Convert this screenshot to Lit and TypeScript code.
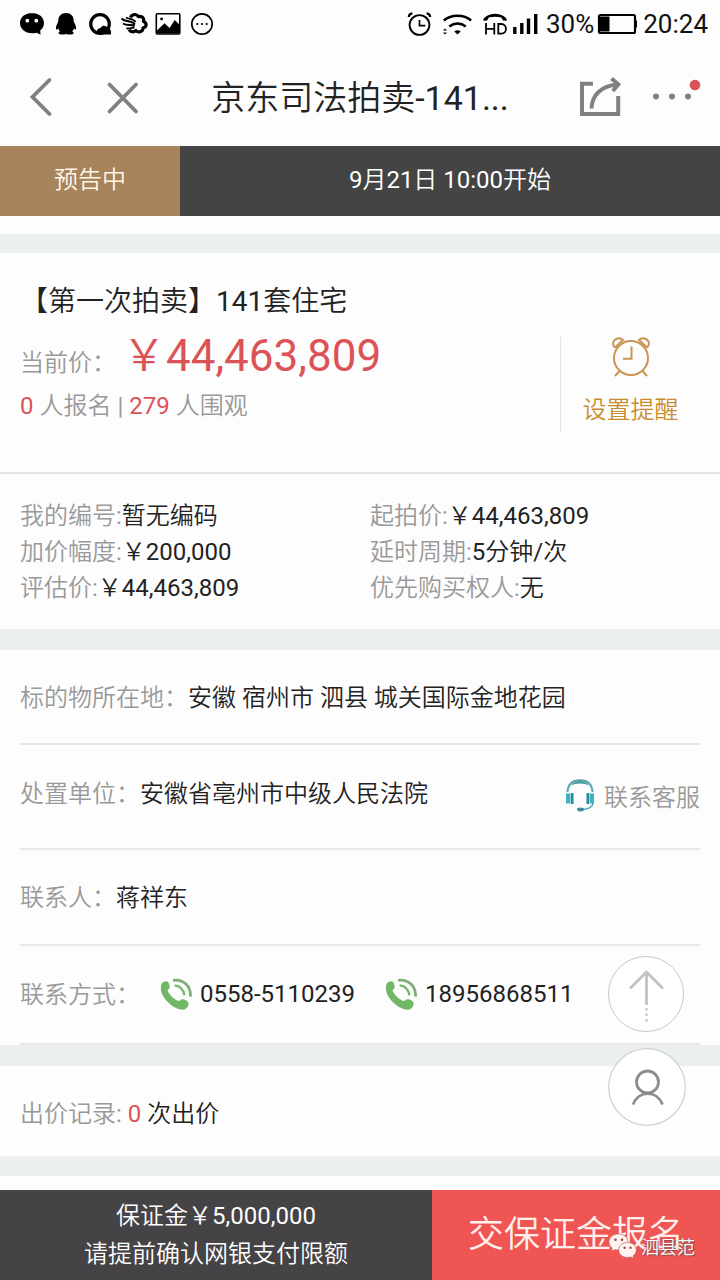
import { LitElement, html, css } from "lit";
import { customElement, property } from "lit/decorators.js";

const fullYen = "\uFFE5";

@customElement("status-bar")
class StatusBar extends LitElement {
  static styles = css`
    :host { display: block; height: 48px; }
    .bar { display: flex; height: 48px; align-items: stretch; justify-content: space-between; padding-right: 12px; font-size: 26px; line-height: 48px; color: #111; }
    .right { display: flex; white-space: nowrap; }
    svg { display: block; flex: none; }
    .level { margin-right: 3px; }
    .time { margin-left: 6px; }
  `;
  render() {
    return html`<div class="bar">
      <svg width="230" height="48" viewBox="0 0 230 48">
        <path d="M32 13c-6.900 0-12 4.300-12 10s5.100 10.300 12 10.300c1.700 0 3.200-.2 4.600-.6l4 2.100-.4-4.400c2.400-1.900 3.800-4.300 3.800-7.400 0-5.700-5.200-10-12-10z" fill="#000"/>
        <circle cx="27.300" cy="20.700" r="1.900" fill="#fff"/><circle cx="36.300" cy="20.700" r="1.900" fill="#fff"/>
        <path d="M66 13c-4.800 0-7.700 3.200-7.700 7.600 0 1.500-.6 2.200-1.300 3.600-1 2-1.400 4.300-.8 5.200.5.500 1.400-.4 2.100-1.200.2 1.400.8 2.400 1.600 3.200-1.400.6-1.600 1.400-1.200 2.100.7 1.300 5.200 1.500 7.300.2 2.200 1.300 6.800 1.100 7.500-.2.400-.8.200-1.500-1.300-2.100.8-.8 1.500-1.800 1.800-3.200.6.800 1.400 1.700 1.900 1.200.5-.8.200-3.200-.8-5.200-.8-1.400-1.400-2.100-1.400-3.600 0-4.400-2.900-7.600-7.700-7.600z" fill="#000"/>
        <circle cx="100" cy="24" r="9.300" fill="none" stroke="#000" stroke-width="3.200"/>
        <path d="M97 30c1.200-2 3-1.500 4-2.500 1.500-2.500 5-2.200 6.500.5 2 .2 3.500 1.800 3.500 3.800v2.800h-11c-2-.5-3.500-2-3-4.600z" fill="#000"/>
        <path d="M130.500 17.500c1.500-3.600 6-4 7.800-.9 4.200-.8 6.200 2 5.200 4.900 3.600 1.300 3.400 5.700-.4 6.300-.4 4.300-4.800 5.300-7.200 2.700-2.300 2.100-5.500 1.500-6.700-.8" fill="none" stroke="#000" stroke-width="3.200" stroke-linejoin="round"/>
        <path d="M121.500 18.500c4.500 4.500 9.500 1 13.500 6M123 23.500c4.500 3 8 .3 11.500 2.500M126.500 28.300c3 .8 5.500-.6 8-1" fill="none" stroke="#000" stroke-width="2"/>
        <path d="M126 17.500c3.500 2 7.500 1 9.500 4.500" fill="none" stroke="#000" stroke-width="1.800"/>
        <rect x="156.300" y="13.700" width="23.500" height="20.300" rx="1" fill="#fff" stroke="#000" stroke-width="1.600"/>
        <path d="M157 33.500v-3l7.500-7.300 5 4.800 5.300-8 5 5v8.500z" fill="#000"/><circle cx="161.600" cy="19" r="1.400"/>
        <circle cx="202" cy="24" r="10.200" fill="none" stroke="#000" stroke-width="1.700"/>
        <circle cx="197.300" cy="24" r="1.100"/><circle cx="202" cy="24" r="1.100"/><circle cx="206.700" cy="24" r="1.100"/>
      </svg>
      <div class="right">
        <svg width="140" height="48" viewBox="406 0 140 48" fill="none" stroke="#000">
          <circle cx="419.500" cy="25" r="9.900" stroke-width="1.900"/>
          <path d="M419.500 20v5.600h5.800" stroke-width="1.700"/>
          <path d="M408.800 17c.2-2 1.600-3.400 3.600-3.600M430.200 17c-.2-2-1.600-3.400-3.600-3.600" stroke-width="2.200"/>
          <path d="M443.800 20.500c7.500-6.400 20-6.400 27.300 0M449.300 26.500c5-4 11.500-4 16.500 0" stroke-width="2.500"/>
          <path d="M454.300 31.500q3.200-2.300 6.400 0l-3.200 3z" fill="#000" stroke="none"/>
          <path d="M443 30.500l2-2 2 2zM443 32.500l2 2 2-2z" fill="#000" stroke="none"/>
          <path d="M483.500 20.700l3.600-.2 1.700-3.100q6.500-1.300 12.500 0l1.800 3.100 3.600.2c1.300-2.300-5-6.900-11.600-6.900s-12.900 4.600-11.600 6.900z" fill="#000" stroke="none"/>
          <path d="M486 23v11.600M486 28.800h8M494.300 23v11.600M498.300 24v9.700h3c6.200 0 6.200-9.700 0-9.700z" stroke-width="1.800"/>
          <path d="M514.800 34v-7M521.800 34V23M528.500 34V18.500M535.700 34V14" stroke-width="3.400"/>
        </svg>
        <span class="level">30%</span>
        <svg width="40" height="48" viewBox="597 0 40 48">
          <rect x="599" y="15" width="36" height="18" rx="1.500" fill="none" stroke="#000" stroke-width="2.200"/>
          <path d="M600 16.500h9.500v15H600zM635 20.500h2.400v7H635z" fill="#000"/>
        </svg>
        <span class="time">20:24</span>
      </div>
    </div>`;
  }
}

@customElement("nav-bar")
class NavBar extends LitElement {
  static styles = css`
    :host { display: block; height: 98px; }
    .bar { display: flex; justify-content: space-between; height: 98px; font-size: 34px; line-height: 100px; color: #222; }
    svg { display: block; flex: none; }
    .title { white-space: nowrap; }
  `;
  render() {
    return html`<div class="bar">
      <svg width="170" height="98" viewBox="0 48 170 98" fill="none" stroke="#808080" stroke-width="3.800" stroke-linecap="round">
        <path d="M49.500 80L32.500 97l17 17M109.500 84.500l26.500 27M136 84.500l-26.500 27"/>
      </svg>
      <span class="title">京东司法拍卖-141...</span>
      <svg width="170" height="98" viewBox="550 48 170 98" fill="none" stroke="#808080" stroke-width="4">
        <path d="M593 83.700h-11V114h36.200V96"/>
        <path d="M591.500 108.500c.5-13.500 9.500-22.500 26-24M611.500 78.500l6.800 6-5.500 6.500"/>
        <g fill="#808080" stroke="none"><circle cx="656" cy="96.500" r="3"/><circle cx="672" cy="96.500" r="3"/><circle cx="688" cy="96.500" r="3"/></g>
        <circle cx="695" cy="85" r="5.300" fill="#dc5259" stroke="none"/>
      </svg>
    </div>`;
  }
}

@customElement("phone-link")
class PhoneLink extends LitElement {
  @property() number = "";
  static styles = css`
    :host { display: flex; align-items: center; color: #222; }
    svg { display: block; margin-right: 8px; }
  `;
  render() {
    return html`<svg width="32" height="34" viewBox="0 0 32 34" fill="none">
        <path d="M2 6.300C3.500 4.500 7 3.600 8.200 5.200c1.300 1.900 1.700 4.500 1.200 5.700-.3 1-1.600 1.600-2 2.400 1.500 4 6 8.500 10.700 10.700 1.600.2 2.400-1.800 4.200-1.800 2.800 0 6.200 2 6.300 4.300.2 2.600-2.300 6.200-5.700 6.300C11 32.500-3.500 16 2 6.300z" fill="#72b765"/>
        <path d="M14.700 8.300c5.500.6 8.800 4.200 9.800 10" stroke="#72b765" stroke-width="2.300"/>
        <path d="M13 3.300c10.700-1.300 18 5.800 17.500 16.300" stroke="#82ad79" stroke-width="2.800"/>
      </svg><span>${this.number}</span>`;
  }
}

@customElement("app-root")
class AppRoot extends LitElement {
  static styles = css`
    :host { display: block; position: relative; width: 720px; height: 1280px; overflow: hidden; background: #fdfdfd; font-family: Roboto, "Noto Sans CJK SC DemiLight", "Noto Sans CJK SC", sans-serif; font-size: 24px; color: #222; }
    svg { display: block; flex: none; }
    .strip { display: flex; height: 70px; line-height: 68px; color: #fff; text-align: center; }
    .state { width: 180px; background: #a8845d; color: #fff6e8; }
    .start { flex: 1; background: #444; }
    .gap { height: 20px; background: #ecf0f1; }
    .gap.first { margin-top: 18px; height: 19px; }
    .gap.tall { height: 21px; }
    .summary { display: flex; height: 221px; box-sizing: border-box; border-bottom: 2px solid #e6e6e6; }
    .info { flex: 1; padding: 29px 0 0 20px; }
    .name { font-size: 28px; line-height: 40px; }
    .price { line-height: 60px; height: 60px; margin-top: 4px; display: flex; align-items: baseline; }
    .amount { font-size: 44px; margin-left: 6px; }
    .label { color: #999; }
    .red { color: #dc5357; }
    .counts { line-height: 36px; margin-top: 2px; color: #999; }
    .remind { width: 140px; height: 95px; box-sizing: border-box; margin: 84px 20px 0 0; border-left: 1px solid #e4e4e4; display: flex; flex-direction: column; align-items: center; color: #c98d2e; line-height: 36px; }
    .remind span { margin-top: 13px; }
    .details { display: grid; grid-template-columns: 350px 1fr; grid-auto-rows: 36px; line-height: 36px; height: 155px; box-sizing: border-box; padding: 24px 0 0 20px; }
    .rows { padding: 0 20px; height: 395px; }
    .row { display: flex; align-items: center; box-sizing: border-box; border-bottom: 2px solid #e8e8e8; white-space: nowrap; }
    .r1 { height: 95px; padding-bottom: 3px; } .r2 { height: 105px; padding-bottom: 10px; } .r3 { height: 96px; padding-bottom: 4px; } .r4 { height: 99px; padding-bottom: 1px; }
    .r4 .label { padding-bottom: 4px; }
    .service { display: flex; align-items: center; margin-left: auto; color: #999; padding-top: 7px; }
    .service svg { margin-right: 8px; }
    .first-phone { margin-left: 20px; }
    .second-phone { margin-left: 30px; }
    .bids { height: 90px; box-sizing: border-box; padding: 2px 20px 0; line-height: 92px; }
    .footer { display: flex; margin-top: 14px; height: 90px; color: #fff; text-align: center; }
    .deposit { width: 432px; background: #454346; line-height: 38px; padding-top: 7px; box-sizing: border-box; }
    .pay { flex: 1; background: #ef5553; font-size: 36px; line-height: 90px; color: #fff0ec; }
    .float { position: absolute; left: 608px; }
    .up { top: 955px; } .user { top: 1048px; }
    .mark { position: absolute; left: 607px; top: 1232px; display: flex; align-items: center; font-size: 18px; line-height: 32px; color: #fff; text-shadow: 1px 1px 1px #7a4a48, 0 0 1px #8a5a58; }
    .mark span { margin-left: 2px; }
  `;

  detail(label: string, value: string) {
    return html`<div><span class="label">${label}:</span>${value}</div>`;
  }

  render() {
    return html`
      <status-bar></status-bar>
      <nav-bar></nav-bar>
      <div class="strip"><div class="state">预告中</div><div class="start">9月21日 10:00开始</div></div>
      <div class="gap first"></div>
      <section class="summary">
        <div class="info">
          <div class="name">【第一次拍卖】141套住宅</div>
          <div class="price"><span class="label">当前价：</span><span class="amount red">${fullYen}44,463,809</span></div>
          <div class="counts"><span class="red">0</span> 人报名 | <span class="red">279</span> 人围观</div>
        </div>
        <div class="remind">
          <svg width="42" height="42" viewBox="0 0 42 42" fill="none" stroke="#c99555" stroke-width="2">
            <circle cx="21" cy="21" r="17"/><path d="M21.500 9.500v12.300H13M9.500 34L5 39M32.500 34l4.500 5"/>
            <path d="M5 10.500C-1 5.500 8-2.500 13 3L5 10.500M37 10.500C43 5.500 34-2.500 29 3l8 7.500"/>
          </svg>
          <span>设置提醒</span>
        </div>
      </section>
      <section class="details">
        ${this.detail("我的编号", "暂无编码")}${this.detail("起拍价", fullYen + "44,463,809")}
        ${this.detail("加价幅度", fullYen + "200,000")}${this.detail("延时周期", "5分钟/次")}
        ${this.detail("评估价", fullYen + "44,463,809")}${this.detail("优先购买权人", "无")}
      </section>
      <div class="gap tall"></div>
      <section class="rows">
        <div class="row r1"><span class="label">标的物所在地：</span>安徽 宿州市 泗县 城关国际金地花园</div>
        <div class="row r2"><span class="label">处置单位：</span>安徽省亳州市中级人民法院
          <div class="service">
            <svg width="32" height="34" viewBox="0 0 32 34" fill="none">
              <path d="M3.500 14C4 6 9 2.200 16 2.200S28 6 28.500 14" stroke="#55a3ab" stroke-width="2"/>
              <path d="M7 7.500C10 1.500 22 1.500 25 7.500 20 4.800 12 4.800 7 7.500z" fill="#4a9aa3"/>
              <path d="M4.200 15.500v10M27.800 15.500v10" stroke="#3fb2bf" stroke-width="4.400"/><path d="M8.200 15v11M23.800 15v11" stroke="#278b98" stroke-width="2.600"/>
              <path d="M29 25c-.5 4-4 6.500-12 6.500" stroke="#46a8b2" stroke-width="1.600"/><ellipse cx="16.500" cy="31.500" rx="3.500" ry="1.900" fill="#378f9a"/>
            </svg><span>联系客服</span>
          </div>
        </div>
        <div class="row r3"><span class="label">联系人：</span>蒋祥东</div>
        <div class="row r4"><span class="label">联系方式：</span>
          <phone-link class="first-phone" .number=${"0558-5110239"}></phone-link>
          <phone-link class="second-phone" .number=${"18956868511"}></phone-link>
        </div>
      </section>
      <div class="gap tall"></div>
      <section class="bids"><span class="label">出价记录:</span> <span class="red">0</span> 次出价</section>
      <div class="gap"></div>
      <footer class="footer">
        <div class="deposit"><div>保证金${fullYen}5,000,000</div><div>请提前确认网银支付限额</div></div>
        <div class="pay">交保证金报名</div>
      </footer>
      <svg class="float up" width="78" height="78" viewBox="0 0 78 78" fill="none">
        <circle cx="38" cy="39" r="37.500" fill="#fff" fill-opacity=".9" stroke="#c9c7c9"/>
        <path d="M38.500 17v33M22 33.500l16.500-16.500L55 33.500" stroke="#c2c2c2" stroke-width="2.800"/>
        <path d="M38.500 53v14" stroke="#c8c8c8" stroke-width="2.400" stroke-dasharray="2.500 3"/>
      </svg>
      <svg class="float user" width="80" height="80" viewBox="0 0 80 80" fill="none">
        <circle cx="39" cy="39" r="38.300" fill="#fff" fill-opacity=".95" stroke="#d2d0d4" stroke-width="1.300"/>
        <circle cx="39.500" cy="34" r="11" stroke="#8c8c8c" stroke-width="2.800"/>
        <path d="M25 56.500c5.500-14.500 24-14.500 29.500 0" stroke="#8c8c8c" stroke-width="2.800"/>
      </svg>
      <div class="mark">
        <svg width="32" height="32" viewBox="0 0 32 32">
          <path d="M11.500 2C6 2 2 5.500 2 10c0 2.500 1.200 4.600 3.200 6L4.500 19l3.500-1.600c5 1.600 13-1 13-7.400C21 5.500 17 2 11.500 2z" fill="#fff4f0" stroke="#b56460" stroke-width=".6"/>
          <path d="M20.500 10.500c-5 0-8.800 3.200-8.800 7.500s3.800 7.500 8.800 7.500c1.200 0 2.300-.2 3.300-.5l3 1.600-.7-2.800c2-1.400 3.200-3.400 3.200-5.800 0-4.300-3.800-7.500-8.800-7.500z" fill="#fff4f0" stroke="#b56460" stroke-width=".7"/>
          <g fill="#9e4743"><circle cx="8.500" cy="7.700" r="1.300"/><circle cx="15" cy="7.700" r="1.300"/><circle cx="17.600" cy="15.700" r="1.200"/><circle cx="23.500" cy="15.700" r="1.200"/></g>
        </svg><span>泗县范</span>
      </div>
    `;
  }
}
